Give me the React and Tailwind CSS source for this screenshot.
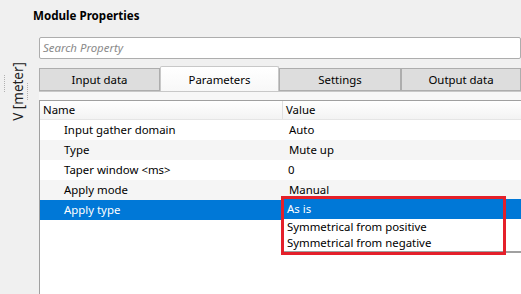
import React from "react";

const rows = [
  { name: "Input gather domain", value: "Auto" },
  { name: "Type", value: "Mute up" },
  { name: "Taper window <ms>", value: "0", tight: true },
  { name: "Apply mode", value: "Manual" },
  { name: "Apply type", value: "", selected: true },
];

const tabs = ["Input data", "Parameters", "Settings", "Output data"];

export default function App() {
  return (
    <div className="relative w-[521px] h-[294px] overflow-hidden bg-[#f0f0f0] text-[11.4px] text-black font-['Noto_Sans',sans-serif] flex flex-col">
      {/* title */}
      <div className="h-[37px] pl-[33px] pt-[7px] font-bold text-[11.6px] leading-[18px]">Module Properties</div>

      <div className="flex flex-1 min-h-0">
        {/* left axis strip */}
        <div className="relative w-[39px] shrink-0">
          <div className="absolute left-[4px] top-[38px] h-[17px] border-l border-dotted border-[#b0b0b0]" />
          <div className="absolute left-[27px] top-[46px] h-[17px] border-l border-dotted border-[#b0b0b0]" />
          <div className="pt-[25px] pl-[11px]">
            <div className="[writing-mode:vertical-rl] rotate-180 leading-[15px] text-[13.5px] text-[#202020]">V [meter]</div>
          </div>
        </div>

        {/* right panel */}
        <div className="flex-1 flex flex-col min-w-0">
          <div className="h-[22px] bg-white border border-[#adadad] rounded-[2px] flex items-center pl-[3px] italic text-[#8a8a8a]">
            Search Property
          </div>

          <div className="flex items-end h-[32px]">
            {tabs.map((t, i) =>
              i === 1 ? (
                <div
                  key={t}
                  className="w-[119px] h-[26px] -mb-[1px] flex items-center justify-center border border-b-0 border-[#c8c8c8] rounded-t-[2px] bg-gradient-to-b from-white to-[#f7f7f7]"
                >
                  {t}
                </div>
              ) : (
                <div
                  key={t}
                  className={`h-[23px] flex items-center justify-center border border-[#adadad] bg-[#dddddd] ${
                    i === 0 ? "w-[121px]" : i === 2 ? "w-[122px]" : "w-[120px]"
                  }`}
                >
                  {t}
                </div>
              )
            )}
          </div>

          {/* pane */}
          <div className="flex-1 flex flex-col pt-[8px] bg-[#f7f7f7] border-t border-[#c8c8c8]">
            <div className="flex-1 bg-white border-t border-l border-[#a0a0a0] flex flex-col">
              <div className="flex h-[19px] bg-gradient-to-b from-white to-[#f3f3f3] border-b border-[#e5e5e5]">
                <div className="w-[243px] pl-[3px] flex items-center border-r border-[#e0e0e0]">Name</div>
                <div className="flex-1 pl-[3px] flex items-center">Value</div>
              </div>
              {rows.map((r, i) => (
                <div
                  key={r.name}
                  className={`flex h-[20px] items-center ${
                    r.selected ? "bg-[#0078d7] text-white" : i % 2 === 1 ? "bg-[#f5f5f5]" : "bg-white"
                  }`}
                >
                  <div className="w-[243px] pl-[24px]">{r.name}</div>
                  <div className={r.tight ? "pl-[5px]" : "pl-[6px]"}>{r.value}</div>
                </div>
              ))}
            </div>
          </div>
        </div>
      </div>

      {/* open combo list */}
      <div className="absolute left-[284px] top-[199px] w-[240px] h-[54px] bg-white border-b-2 border-[#a0a0a0] flex flex-col">
        <div className="h-[20px] bg-[#0078d7] text-white flex items-center pl-[3px]">As is</div>
        <div className="h-[16px] flex items-center pl-[3px]">Symmetrical from positive</div>
        <div className="h-[16px] flex items-center pl-[3px]">Symmetrical from negative</div>
      </div>

      {/* red annotation */}
      <div className="absolute left-[281px] top-[196px] w-[225px] h-[59px] border-[3px] border-[#e4202a]" />
    </div>
  );
}
